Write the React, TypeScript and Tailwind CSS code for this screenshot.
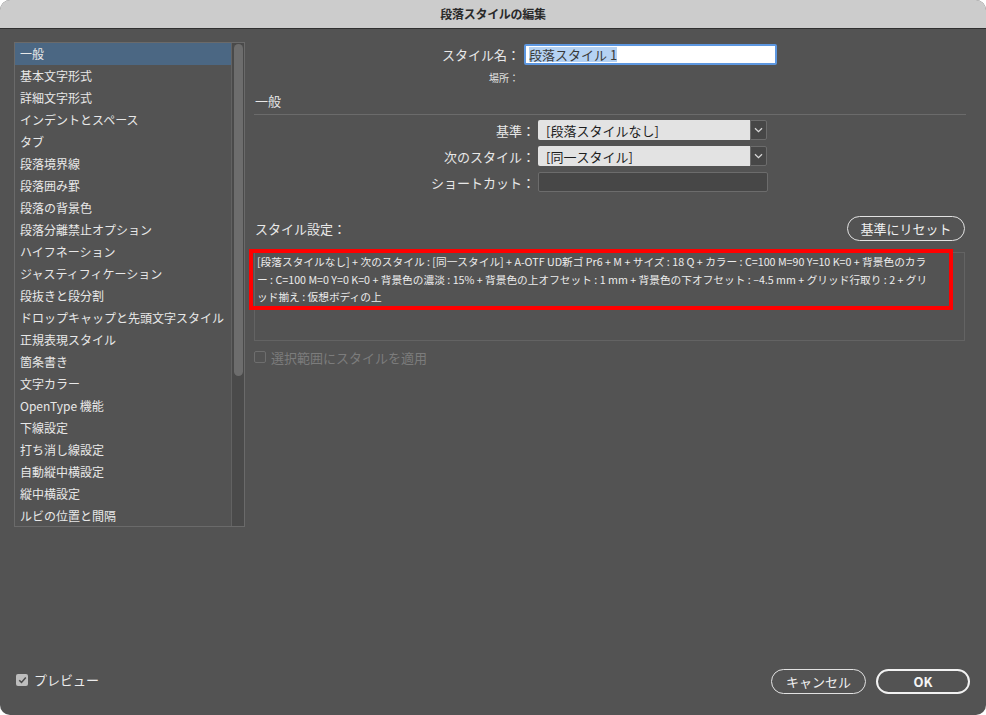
import React from "react";

const items = [
  "一般",
  "基本文字形式",
  "詳細文字形式",
  "インデントとスペース",
  "タブ",
  "段落境界線",
  "段落囲み罫",
  "段落の背景色",
  "段落分離禁止オプション",
  "ハイフネーション",
  "ジャスティフィケーション",
  "段抜きと段分割",
  "ドロップキャップと先頭文字スタイル",
  "正規表現スタイル",
  "箇条書き",
  "文字カラー",
  "OpenType 機能",
  "下線設定",
  "打ち消し線設定",
  "自動縦中横設定",
  "縦中横設定",
  "ルビの位置と間隔",
];

const Chevron = () => (
  <svg width="9" height="6" viewBox="0 0 9 6" fill="none">
    <path d="M1 1.2 L4.5 4.6 L8 1.2" stroke="#d8d8d8" strokeWidth="1.3" />
  </svg>
);

function Select({ value }: { value: string }) {
  return (
    <div className="flex h-[20px] w-[229px]">
      <div className="flex-1 bg-[#e3e3e3] rounded-l-[2px] flex items-center pl-[8px] text-[13px] text-[#1e1e1e] leading-none">
        {value}
      </div>
      <div className="w-[17px] bg-[#474747] border border-[#6c6c6c] rounded-r-[2px] flex items-center justify-center">
        <Chevron />
      </div>
    </div>
  );
}

export default function App() {
  const font = { fontFamily: '"Noto Sans CJK JP", "Noto Sans", sans-serif' };
  return (
    <div className="w-[986px] h-[715px] bg-white" style={font}>
      <div className="w-full h-full rounded-[10px] overflow-hidden flex flex-col bg-[#535353]">
        <div className="h-[29px] shrink-0 bg-[#cccccc] border-b border-[#2f2f2f] flex items-center justify-center">
          <span className="text-[12px] font-bold text-[#2a2a2a] tracking-[-0.3px]">段落スタイルの編集</span>
        </div>
        <div className="flex-1 flex flex-col">
          <div className="flex">
            {/* list */}
            <div className="ml-[14px] mt-[13px] w-[231px] h-[485px] border border-[#6a6a6a] flex overflow-hidden">
              <div className="flex-1 flex flex-col">
                {items.map((t, i) => (
                  <div
                    key={t}
                    className={
                      "h-[22px] shrink-0 flex items-center pl-[5px] text-[12px] text-[#e8e8e8] leading-none " +
                      (i === 0 ? "bg-[#4b6783]" : "")
                    }
                  >
                    {t}
                  </div>
                ))}
              </div>
              <div className="w-[13px] bg-[#4a4a4a] border-l border-[#626262] flex justify-center">
                <div className="w-[9px] h-[332px] mt-[1px] rounded-full bg-[#6d6d6d]" />
              </div>
            </div>

            {/* right */}
            <div className="ml-[9px] w-[712px] flex flex-col mt-[15px]">
              <div className="flex items-center h-[21px]">
                <div className="w-[266px] text-right text-[13px] text-[#e8e8e8] leading-none">スタイル名：</div>
                <div className="ml-[4px] w-[253px] h-[21px] bg-white border-2 border-[#5d97e0] rounded-[2px] flex items-center pl-[3px]">
                  <span className="bg-[#b5d2f3] text-[13px] text-[#3a3a3a] leading-[15px]">段落スタイル 1</span>
                </div>
              </div>
              <div className="mt-[6px] h-[14px] flex items-center">
                <div className="w-[265px] text-right text-[10px] text-[#e0e0e0] leading-none">場所：</div>
              </div>
              <div className="mt-[7px] h-[16px] flex items-center pl-[1px] text-[13px] text-[#e8e8e8] leading-none">一般</div>
              <div className="mt-[6px] h-[1px] bg-[#6b6b6b]" />
              <div className="mt-[5px] flex flex-col gap-[6px]">
                <div className="flex items-center h-[20px]">
                  <div className="w-[281px] text-right text-[13px] text-[#e8e8e8] leading-none">基準：</div>
                  <div className="ml-[3px]"><Select value="[段落スタイルなし]" /></div>
                </div>
                <div className="flex items-center h-[20px]">
                  <div className="w-[281px] text-right text-[13px] text-[#e8e8e8] leading-none">次のスタイル：</div>
                  <div className="ml-[3px]"><Select value="[同一スタイル]" /></div>
                </div>
                <div className="flex items-center h-[20px]">
                  <div className="w-[281px] text-right text-[13px] text-[#e8e8e8] leading-none">ショートカット：</div>
                  <div className="ml-[3px] w-[230px] h-[20px] bg-[#474747] border border-[#6c6c6c] rounded-[2px]" />
                </div>
              </div>
              <div className="mt-[24px] h-[25px] flex items-center justify-between pr-[1px]">
                <div className="pl-[1px] text-[13px] text-[#e8e8e8] leading-none">スタイル設定：</div>
                <div className="w-[118px] h-[25px] rounded-full border border-[#e2e2e2] flex items-center justify-center text-[13px] text-[#f0f0f0] leading-none">
                  基準にリセット
                </div>
              </div>
              <div className="relative mt-[11px] w-[711px] h-[89px] border border-[#636363]">
                <div className="pl-[2px] text-[10.7px] text-[#ececec] leading-[17.5px] whitespace-nowrap">
                  <div>[段落スタイルなし] + 次のスタイル : [同一スタイル] + A-OTF UD新ゴ Pr6 + M + サイズ : 18 Q + カラー : C=100 M=90 Y=10 K=0 + 背景色のカラ</div>
                  <div>ー : C=100 M=0 Y=0 K=0 + 背景色の濃淡 : 15% + 背景色の上オフセット : 1 mm + 背景色の下オフセット : –4.5 mm + グリッド行取り : 2 + グリ</div>
                  <div>ッド揃え : 仮想ボディの上</div>
                </div>
                <div className="absolute left-[-6px] top-[-4px] w-[704px] h-[61px] border-[4px] border-[#ff0000]" />
              </div>
              <div className="mt-[8px] h-[16px] flex items-center">
                <div className="w-[12px] h-[12px] border border-[#6e6e6e] rounded-[2px]" />
                <span className="ml-[5px] text-[13px] text-[#7c7c7c] leading-none">選択範囲にスタイルを適用</span>
              </div>
            </div>
          </div>

          <div className="flex-1" />
          <div className="flex items-center justify-between pl-[16px] pr-[16px] pb-[21px]">
            <div className="flex items-center mb-[4px]">
              <div className="w-[12px] h-[12px] rounded-[2px] bg-[#bdbdbd] flex items-center justify-center">
                <svg width="9" height="8" viewBox="0 0 9 8" fill="none">
                  <path d="M1.2 4.2 L3.5 6.4 L7.8 1.4" stroke="#4a4a4a" strokeWidth="1.5" />
                </svg>
              </div>
              <span className="ml-[6px] text-[13px] text-[#ececec] leading-none">プレビュー</span>
            </div>
            <div className="flex items-center gap-[10px]">
              <div className="w-[95px] h-[25px] rounded-full border border-[#e2e2e2] flex items-center justify-center text-[13px] text-[#f0f0f0] leading-none">
                キャンセル
              </div>
              <div className="w-[94px] h-[25px] rounded-full border-2 border-[#f2f2f2] flex items-center justify-center text-[13px] font-bold text-[#f4f4f4] leading-none">
                OK
              </div>
            </div>
          </div>
        </div>
      </div>
    </div>
  );
}
